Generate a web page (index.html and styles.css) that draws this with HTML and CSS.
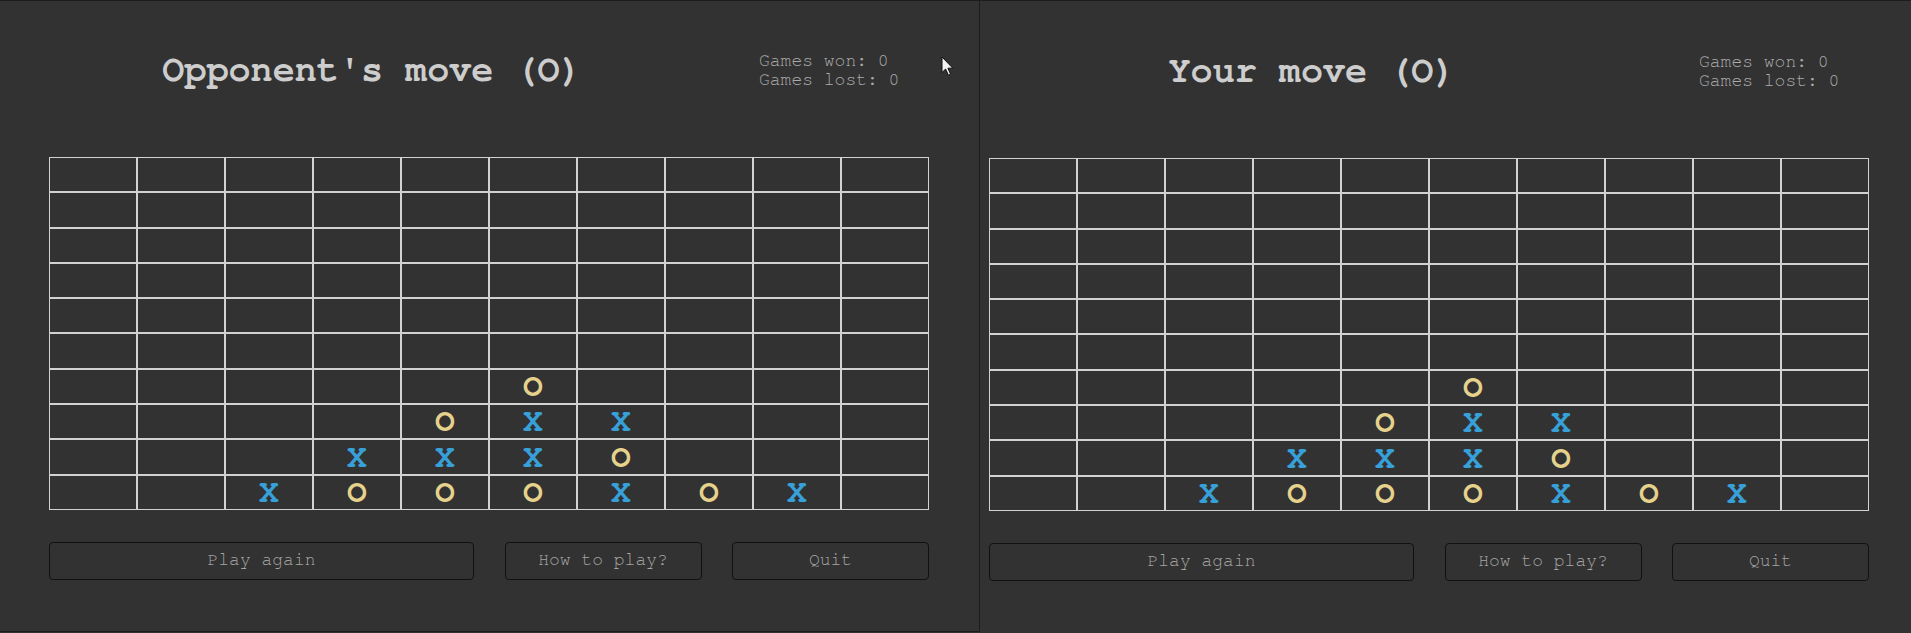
FILE: index.html
```html
<!DOCTYPE html>
<html lang="en">
<head>
<meta charset="utf-8">
<title>Five in a row</title>
<link rel="stylesheet" href="styles.css">
</head>
<body>
<div class="desktop">
  <section class="window window-left">
    <header class="head">
      <h1 class="title">Opponent's move (O)</h1>
      <div class="stats">
        <div>Games won: 0</div>
        <div>Games lost: 0</div>
      </div>
    </header>
    <div class="board">
      <div class="c"></div><div class="c"></div><div class="c"></div><div class="c"></div><div class="c"></div><div class="c"></div><div class="c"></div><div class="c"></div><div class="c"></div><div class="c"></div>
      <div class="c"></div><div class="c"></div><div class="c"></div><div class="c"></div><div class="c"></div><div class="c"></div><div class="c"></div><div class="c"></div><div class="c"></div><div class="c"></div>
      <div class="c"></div><div class="c"></div><div class="c"></div><div class="c"></div><div class="c"></div><div class="c"></div><div class="c"></div><div class="c"></div><div class="c"></div><div class="c"></div>
      <div class="c"></div><div class="c"></div><div class="c"></div><div class="c"></div><div class="c"></div><div class="c"></div><div class="c"></div><div class="c"></div><div class="c"></div><div class="c"></div>
      <div class="c"></div><div class="c"></div><div class="c"></div><div class="c"></div><div class="c"></div><div class="c"></div><div class="c"></div><div class="c"></div><div class="c"></div><div class="c"></div>
      <div class="c"></div><div class="c"></div><div class="c"></div><div class="c"></div><div class="c"></div><div class="c"></div><div class="c"></div><div class="c"></div><div class="c"></div><div class="c"></div>
      <div class="c"></div><div class="c"></div><div class="c"></div><div class="c"></div><div class="c"></div><div class="c o">O</div><div class="c"></div><div class="c"></div><div class="c"></div><div class="c"></div>
      <div class="c"></div><div class="c"></div><div class="c"></div><div class="c"></div><div class="c o">O</div><div class="c x">X</div><div class="c x">X</div><div class="c"></div><div class="c"></div><div class="c"></div>
      <div class="c"></div><div class="c"></div><div class="c"></div><div class="c x">X</div><div class="c x">X</div><div class="c x">X</div><div class="c o">O</div><div class="c"></div><div class="c"></div><div class="c"></div>
      <div class="c"></div><div class="c"></div><div class="c x">X</div><div class="c o">O</div><div class="c o">O</div><div class="c o">O</div><div class="c x">X</div><div class="c o">O</div><div class="c x">X</div><div class="c"></div>
    </div>
    <div class="actions">
      <button class="btn">Play again</button>
      <button class="btn">How to play?</button>
      <button class="btn">Quit</button>
    </div>
    <svg class="cursor" width="14" height="21" viewBox="0 0 14 21" aria-hidden="true">
      <path d="M1 1 L1 16.5 L4.6 13 L7.4 19.2 L9.6 18.2 L6.9 12.2 L11.8 12.2 Z" fill="#f2f2f2" stroke="#111" stroke-width="1" stroke-linejoin="miter"/>
    </svg>
  </section>

  <section class="window window-right">
    <header class="head">
      <h1 class="title">Your move (O)</h1>
      <div class="stats">
        <div>Games won: 0</div>
        <div>Games lost: 0</div>
      </div>
    </header>
    <div class="board">
      <div class="c"></div><div class="c"></div><div class="c"></div><div class="c"></div><div class="c"></div><div class="c"></div><div class="c"></div><div class="c"></div><div class="c"></div><div class="c"></div>
      <div class="c"></div><div class="c"></div><div class="c"></div><div class="c"></div><div class="c"></div><div class="c"></div><div class="c"></div><div class="c"></div><div class="c"></div><div class="c"></div>
      <div class="c"></div><div class="c"></div><div class="c"></div><div class="c"></div><div class="c"></div><div class="c"></div><div class="c"></div><div class="c"></div><div class="c"></div><div class="c"></div>
      <div class="c"></div><div class="c"></div><div class="c"></div><div class="c"></div><div class="c"></div><div class="c"></div><div class="c"></div><div class="c"></div><div class="c"></div><div class="c"></div>
      <div class="c"></div><div class="c"></div><div class="c"></div><div class="c"></div><div class="c"></div><div class="c"></div><div class="c"></div><div class="c"></div><div class="c"></div><div class="c"></div>
      <div class="c"></div><div class="c"></div><div class="c"></div><div class="c"></div><div class="c"></div><div class="c"></div><div class="c"></div><div class="c"></div><div class="c"></div><div class="c"></div>
      <div class="c"></div><div class="c"></div><div class="c"></div><div class="c"></div><div class="c"></div><div class="c o">O</div><div class="c"></div><div class="c"></div><div class="c"></div><div class="c"></div>
      <div class="c"></div><div class="c"></div><div class="c"></div><div class="c"></div><div class="c o">O</div><div class="c x">X</div><div class="c x">X</div><div class="c"></div><div class="c"></div><div class="c"></div>
      <div class="c"></div><div class="c"></div><div class="c"></div><div class="c x">X</div><div class="c x">X</div><div class="c x">X</div><div class="c o">O</div><div class="c"></div><div class="c"></div><div class="c"></div>
      <div class="c"></div><div class="c"></div><div class="c x">X</div><div class="c o">O</div><div class="c o">O</div><div class="c o">O</div><div class="c x">X</div><div class="c o">O</div><div class="c x">X</div><div class="c"></div>
    </div>
    <div class="actions">
      <button class="btn">Play again</button>
      <button class="btn">How to play?</button>
      <button class="btn">Quit</button>
    </div>
  </section>
</div>
</body>
</html>
```
FILE: styles.css
```css
html, body {
  margin: 0;
  padding: 0;
  background: #323232;
  overflow: hidden;
}

body {
  font-family: "Nimbus Mono PS", "Nimbus Mono L", "FreeMono", "Courier 10 Pitch", "Courier New", "Liberation Mono", monospace;
}

.desktop {
  display: flex;
  align-items: flex-start;
  height: 633px;
  border-top: 1px solid #1d1d1d;
  box-sizing: border-box;
}

.window {
  position: relative;
  box-sizing: border-box;
  display: flex;
  flex-direction: column;
  background: #323232;
}

.window-left {
  width: 980px;
  height: 631px;
  padding: 51px 0 0 49px;
  border-right: 1px solid #1c1c1c;
  border-bottom: 1px solid #1c1c1c;
}

.window-right {
  flex: 1;
  height: 632px;
  padding: 52px 0 0 9px;
}

.head {
  display: flex;
  align-items: flex-start;
  width: 880px;
  height: 39px;
}

.title {
  margin: 0;
  width: 646px;
  text-align: center;
  font-size: 36.8px;
  line-height: 36px;
  font-weight: 700;
  color: #cdcdcd;
}

.stats {
  margin-left: 64px;
  font-size: 18px;
  line-height: 19px;
  color: #ababab;
}

.board {
  margin-top: 66px;
  display: grid;
  grid-template-columns: repeat(10, 88px);
  grid-template-rows: repeat(10, 35.3px);
  width: 880px;
}

.c {
  box-sizing: border-box;
  border: 1px solid #d2d2d2;
  display: flex;
  align-items: center;
  justify-content: center;
  padding-top: 1px;
  font-size: 33px;
  line-height: 32px;
  font-weight: 700;
}

.x {
  color: #37a0d8;
}

.o {
  color: #e6d28c;
}

.actions {
  margin-top: 32px;
  display: grid;
  grid-template-columns: 425px 197px 197px;
  column-gap: 30.5px;
  width: 880px;
}

.btn {
  box-sizing: border-box;
  height: 38px;
  margin: 0;
  padding: 0 0 2px 0;
  background: #323232;
  border: 1px solid #111111;
  border-radius: 4px;
  color: #a6a6a6;
  font-family: inherit;
  font-size: 18px;
  line-height: 34px;
}

.cursor {
  position: absolute;
  left: 941px;
  top: 55px;
}
```
